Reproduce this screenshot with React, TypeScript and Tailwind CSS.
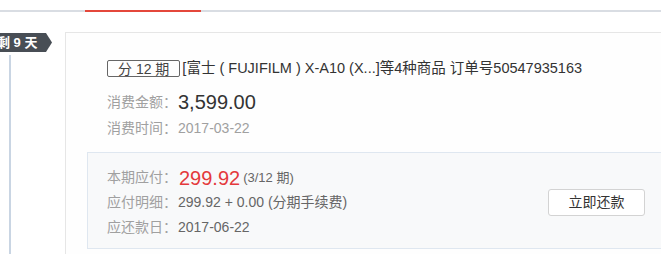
export default function App() {
  return (
    <div className="w-[661px] h-[254px] overflow-hidden bg-white font-['Liberation_Sans','Noto_Sans_CJK_SC',sans-serif]">
      {/* top tab underline */}
      <div className="pt-[10px]">
        <div className="h-[2px] bg-[#d9dde3]">
          <div className="ml-[85px] w-[116px] h-[2px] bg-[#e4473b]" />
        </div>
      </div>

      <div className="flex mt-[20px]">
        {/* timeline */}
        <div className="w-[65px] shrink-0 flex flex-col">
          <div className="flex h-[19px] mt-[1px]">
            <div className="w-[46px] h-[19px] bg-[#484e55] flex items-center overflow-hidden">
              <span className="ml-[-3px] text-[13px] leading-none font-bold text-white whitespace-nowrap">剩 9 天</span>
            </div>
            <svg width="6" height="19" viewBox="0 0 6 19" className="block">
              <polygon points="0,0 6,9.5 0,19" fill="#484e55" />
            </svg>
          </div>
          <div className="ml-[9px] mt-[3px] w-[2px] h-[220px] bg-[#c9d5e3]" />
        </div>

        {/* order card */}
        <div className="w-[640px] shrink-0 border border-[#e6e6e6] bg-[#fefefe] pl-[41px] pt-[27px]">
          <div className="flex items-center h-[17px] text-[14.5px] text-[#333]">
            <span className="h-[17px] px-[10px] border border-[#666] rounded-[2px] flex items-center text-[14px] leading-none text-[#444]">分 12 期</span>
            <span className="ml-[2px] whitespace-nowrap">[富士 ( FUJIFILM ) X-A10 (X...]等4种商品 订单号50547935163</span>
          </div>
          <div className="mt-[12px] flex items-center h-[26px]">
            <span className="text-[14px] text-[#a0a0a0]">消费金额：</span>
            <span className="ml-[1px] text-[20px] text-[#333]">3,599.00</span>
          </div>
          <div className="flex items-center h-[26px] text-[14px] text-[#a0a0a0]">
            <span>消费时间：</span>
            <span className="ml-[1px]">2017-03-22</span>
          </div>

          <div className="mt-[11px] -ml-[20px] w-[578px] border border-[#dfe7f0] bg-[#f8f9fa] flex items-center pl-[19px] pr-[19px] pt-[12px] pb-[8px]">
            <div className="flex-1 flex flex-col">
              <div className="flex items-center h-[25px]">
                <span className="text-[14px] text-[#a0a0a0]">本期应付：</span>
                <span className="ml-[2px] text-[20px] text-[#e4393c]">299.92</span>
                <span className="ml-[3px] text-[13px] text-[#666]">(3/12 期)</span>
              </div>
              <div className="flex items-center h-[25px] text-[14px]">
                <span className="text-[#a0a0a0]">应付明细：</span>
                <span className="ml-[1px] text-[#666]">299.92 + 0.00 (分期手续费)</span>
              </div>
              <div className="flex items-center h-[25px] text-[14px]">
                <span className="text-[#a0a0a0]">应还款日：</span>
                <span className="ml-[1px] text-[#666]">2017-06-22</span>
              </div>
            </div>
            <button className="w-[97px] h-[27px] border border-[#d3d3d3] rounded-[3px] bg-white text-[14px] text-[#333]">立即还款</button>
          </div>
        </div>
      </div>
    </div>
  )
}
